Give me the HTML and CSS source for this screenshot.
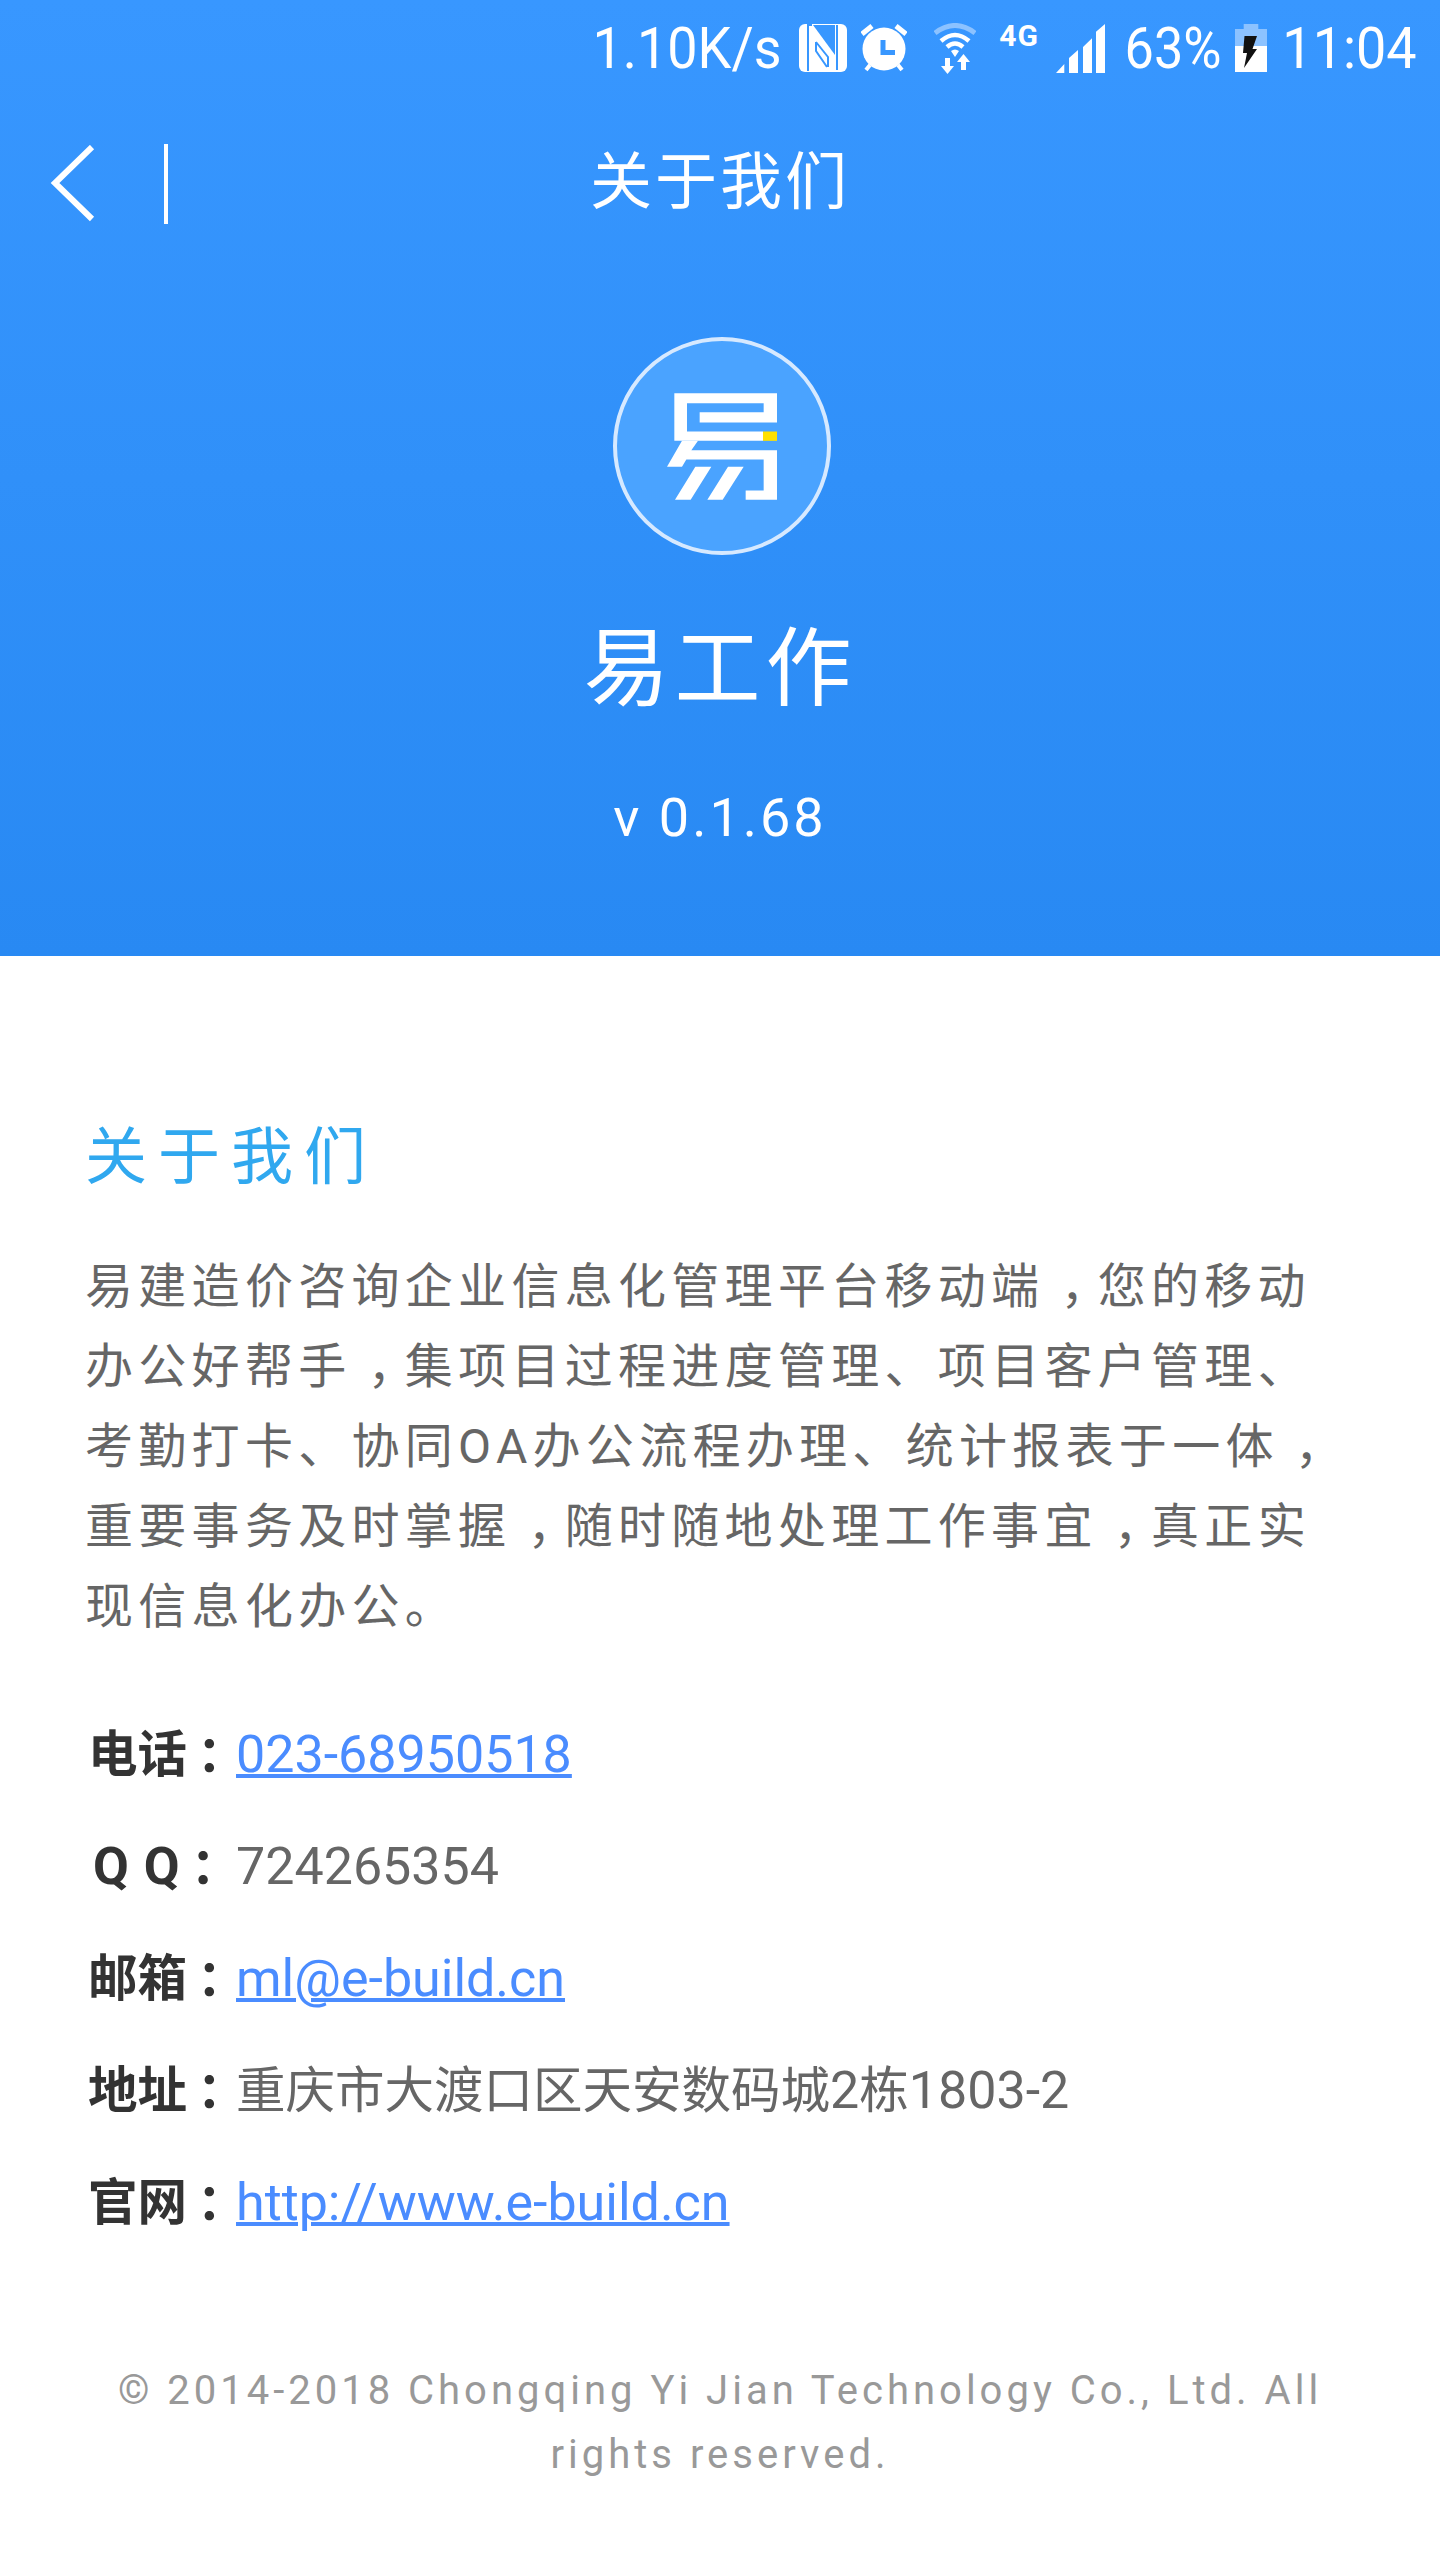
FILE: index.html
```html
<!DOCTYPE html>
<html lang="zh-CN">
<head>
    <meta charset="UTF-8">
    <title>关于我们</title>
    <link rel="stylesheet" href="styles.css">
</head>
<body>
    <header class="hero">
        <div class="status-bar">
            <span class="status-text status-speed">1.10K/s</span>
            <svg class="icon-nfc" width="48" height="48" viewBox="0 0 48 48">
                <rect width="48" height="48" rx="6" fill="#fff"/>
                <path d="M14 1H36V31Z" fill="#3897ff"/>
                <path d="M9 47V2M38 46V1M8 1H13M17 18V27L28 43M17 18 29 33V43" fill="none" stroke="#3897ff" stroke-width="2"/>
            </svg>
            <svg class="icon-alarm" width="46" height="48" viewBox="0 0 46 48">
                <circle cx="23" cy="25" r="21.5" fill="#fff"/>
                <path d="M1 10 11 2M45 10 35 2" fill="none" stroke="#fff" stroke-width="5"/>
                <path d="M5 46 9 41M41 46 37 41" fill="none" stroke="#fff" stroke-width="4"/>
                <path d="M22 16V28.500H34" fill="none" stroke="#3897ff" stroke-width="5"/>
            </svg>
            <svg class="icon-wifi" width="42" height="51" viewBox="0 0 42 51">
                <path d="M1 10Q21 -5 41 10" fill="none" stroke="#8cc2ff" stroke-width="5"/>
                <path d="M7 18Q21 6 35 18M13 24Q21 17 29 24" fill="none" stroke="#fff" stroke-width="4.500"/>
                <path d="M17 28Q21 25 25 28L21 34ZM11 35H16V43H20L13.500 51 7 43H11ZM27 47V39H23L29.500 31 36 39H32V47Z" fill="#fff"/>
            </svg>
            <span class="status-4g">4G</span>
            <svg class="icon-signal" width="49" height="49" viewBox="0 0 49 49">
                <path d="M0 49 8.300 40V49ZM13 34 22 26V49H13ZM27 23 36 14.300V49H27ZM40 7.700 49 0V49H40Z" fill="#fff"/>
            </svg>
            <span class="status-text status-percent">63%</span>
            <svg class="icon-battery" width="32" height="48" viewBox="0 0 32 48">
                <path d="M8.700 0H23.300V5H32V22H0V5H8.700Z" fill="#8cc2ff"/>
                <path d="M0 22H32V48H0Z" fill="#fff"/>
                <path d="M9.500 12H22L17.500 25H22L9 44 12 29H8Z" fill="#111"/>
            </svg>
            <span class="status-text status-time">11:04</span>
        </div>
        <div class="nav-bar">
            <svg class="nav-back" width="46" height="78" viewBox="0 0 46 78">
                <path d="M42 2 5 38 42 74" fill="none" stroke="#fff" stroke-width="6"/>
            </svg>
            <span class="nav-line"></span>
            <h1 class="nav-title">关于我们</h1>
        </div>
        <div class="logo">
            <svg width="110" height="107" viewBox="225 225 330 320">
                <path fill="#fff" d="M247 225H555V313H323V282H515V255H285V340H513V368H247Z"/>
                <rect x="513" y="340" width="42" height="28" fill="#ffe000"/>
                <path fill="#fff" d="M270 368H318L298 396H555V545H461V517H515V424H283L270 446H225ZM310 446H358L296 545H249ZM408 446H455L392 545H346Z"/>
            </svg>
        </div>
        <div class="app-name">易工作</div>
        <div class="app-version">v 0.1.68</div>
    </header>

    <main class="content">
        <h2 class="section-title">关于我们</h2>
        <p class="intro">易建造价咨询企业信息化管理平台移动端<span class="comma">，</span>您的移动办公好帮手<span class="comma">，</span>集项目过程进度管理、项目客户管理、考勤打卡、协同OA办公流程办理、统计报表于一体<span class="comma">，</span>重要事务及时掌握<span class="comma">，</span>随时随地处理工作事宜<span class="comma">，</span>真正实现信息化办公。</p>

        <ul class="contact-list">
            <li class="contact-row"><span class="contact-label">电话<span class="colon">：</span></span><a href="#">023-68950518</a></li>
            <li class="contact-row"><span class="contact-label label-qq"><span class="latin">Q Q</span><span class="colon">：</span></span><span class="latin">724265354</span></li>
            <li class="contact-row"><span class="contact-label">邮箱<span class="colon">：</span></span><a href="#">ml@e-build.cn</a></li>
            <li class="contact-row"><span class="contact-label">地址<span class="colon">：</span></span><span>重庆市大渡口区天安数码城<span class="latin">2</span>栋<span class="latin">1803-2</span></span></li>
            <li class="contact-row"><span class="contact-label">官网<span class="colon">：</span></span><a href="#">http://www.e-build.cn</a></li>
        </ul>

        <p class="copyright">© 2014-2018 Chongqing Yi Jian Technology Co., Ltd. All rights reserved.</p>
    </main>
</body>
</html>
```
FILE: styles.css
```css
/* General Styles */
body {
    margin: 0;
    background-color: #fff;
    font-family: Roboto, "Noto Sans CJK SC", sans-serif;
    color: #666;
}

/* Blue header */
.hero {
    height: 956px;
    background: linear-gradient(#3897ff, #2889f3);
    color: #fff;
    text-align: center;
    overflow: hidden;
}

/* Status bar */
.status-bar {
    display: flex;
    justify-content: flex-end;
    align-items: center;
    height: 50px;
    padding: 23px 25px 0 0;
}

.status-text {
    display: flex;
    justify-content: center;
    flex: none;
    font-size: 58px;
    line-height: 50px;
    white-space: nowrap;
    transform: scaleX(.93);
}

.status-speed {
    width: 188px;
}

.status-percent {
    width: 96px;
    margin-left: 20px;
    transform: scaleX(.9);
}

.status-time {
    width: 131px;
    margin-left: 17px;
}

.icon-nfc {
    margin-left: 18px;
}

.icon-alarm {
    margin-left: 14px;
}

.icon-wifi {
    margin-left: 27px;
}

.status-4g {
    align-self: flex-start;
    margin-left: 23px;
    font-size: 30px;
    font-weight: 700;
    line-height: 26px;
    letter-spacing: 1px;
}

.icon-signal {
    margin-left: 17px;
}

.icon-battery {
    margin-left: 14px;
}

/* Nav */
.nav-bar {
    position: relative;
    display: flex;
    align-items: center;
    height: 80px;
    margin-top: 71px;
    padding-left: 50px;
}

.nav-line {
    width: 4px;
    height: 80px;
    margin-left: 68px;
    background: #fff;
}

.nav-title {
    position: absolute;
    left: 0;
    right: 0;
    margin: 0;
    padding-bottom: 14px;
    font-size: 62px;
    font-weight: 400;
    letter-spacing: 3px;
}

/* App info */
.logo {
    display: flex;
    align-items: center;
    justify-content: center;
    box-sizing: border-box;
    width: 218px;
    height: 218px;
    margin: 113px 0 0 613px;
    border: 4px solid #d6e9ff;
    border-radius: 50%;
    background: #4aa3ff;
}

.app-name {
    margin-top: 65px;
    font-size: 86px;
    line-height: 100px;
    letter-spacing: 5px;
}

.app-version {
    margin-top: 68px;
    font-size: 54px;
    line-height: 60px;
    letter-spacing: 3px;
}

/* Content */
.content {
    padding: 0 85px;
}

.section-title {
    margin: 166px 0 0;
    font-size: 62px;
    font-weight: 400;
    line-height: 72px;
    letter-spacing: 11px;
    color: #30a8ef;
}

.intro {
    margin: 53px 0 0;
    font-size: 48px;
    line-height: 80px;
    letter-spacing: 5.3px;
}

/* comma sits in the middle of its cell */
.comma {
    margin-left: 16px;
    letter-spacing: -10.7px;
}

.contact-list {
    margin: 48px 0 0;
    padding: 0;
    list-style: none;
}

.contact-row {
    display: flex;
    align-items: baseline;
    height: 112px;
    font-size: 49.500px;
    line-height: 112px;
}

.contact-row a,
.latin {
    font-size: 52px;
}

.contact-row a {
    color: #4a8cff;
    text-decoration-thickness: 4px;
}

.contact-label {
    flex: none;
    box-sizing: border-box;
    width: 151px;
    padding-left: 3px;
    font-weight: 700;
    white-space: nowrap;
    color: #333;
}

.label-qq {
    padding-left: 8px;
}

.label-qq .latin {
    letter-spacing: 1px;
}

/* colon is centred in its cell, pushed a bit right of the label */
.colon {
    margin-left: 10px;
    letter-spacing: -14px;
    font-family: "Noto Sans CJK TC", sans-serif;
}

.copyright {
    margin: 104px 0 0;
    font-size: 40px;
    line-height: 64px;
    letter-spacing: 4px;
    text-align: center;
    color: #999;
}
```
